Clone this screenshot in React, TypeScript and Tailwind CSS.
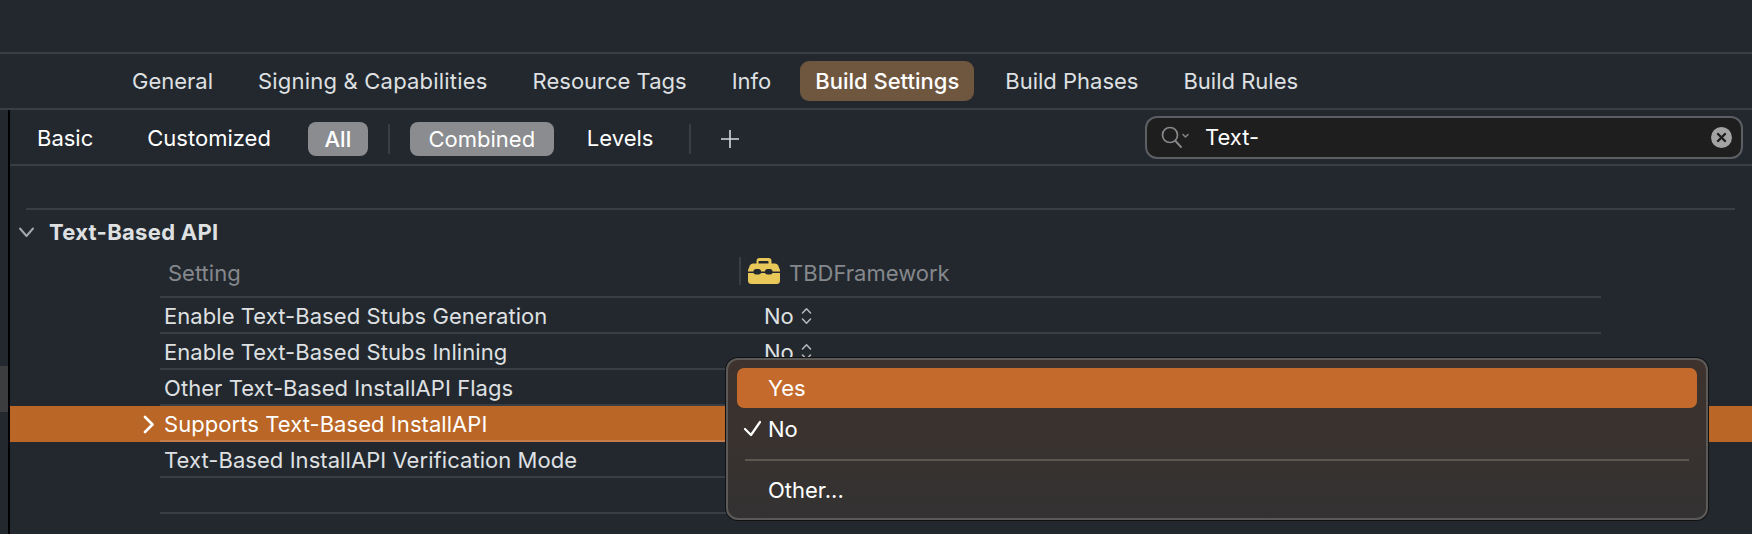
import React from 'react';

const tabs = ['General', 'Signing & Capabilities', 'Resource Tags', 'Info', 'Build Settings', 'Build Phases', 'Build Rules'];

const rows = [
  { name: 'Enable Text-Based Stubs Generation', value: 'No' },
  { name: 'Enable Text-Based Stubs Inlining', value: 'No' },
  { name: 'Other Text-Based InstallAPI Flags' },
  { name: 'Supports Text-Based InstallAPI', selected: true },
  { name: 'Text-Based InstallAPI Verification Mode' },
  { name: '' },
];

const UpDown = () => (
  <svg width="11" height="20" viewBox="0 0 11 20" fill="none" stroke="#b4b6b9" strokeWidth="1.6" strokeLinecap="round" strokeLinejoin="round">
    <path d="M1.500 7 5.500 2.800 9.500 7" />
    <path d="M1.500 13 5.500 17.200 9.500 13" />
  </svg>
);

const Toolbox = () => (
  <svg width="32" height="26" viewBox="0 0 32 26">
    <path d="M8.500 7V3a3 3 0 0 1 3-3h9a3 3 0 0 1 3 3v4h-3V3.500a.6.6 0 0 0-.6-.6h-8.800a.6.6 0 0 0-.6.6V7z" fill="#e9c85a" />
    <path d="M5 5.500h22a3.500 3.500 0 0 1 3 1.700L32 12v10.500a3.500 3.500 0 0 1-3.500 3.500h-25A3.500 3.500 0 0 1 0 22.500V12l2-4.800a3.500 3.500 0 0 1 3-1.700z" fill="#e9c85a" />
    <rect x="0" y="13.500" width="32" height="1.500" fill="#23282f" />
    <rect x="5.500" y="11" width="7.500" height="5.500" rx="2.500" fill="#23282f" />
    <rect x="17" y="11" width="7.500" height="5.500" rx="2.500" fill="#23282f" />
  </svg>
);

const SearchIcon = () => (
  <svg width="30" height="26" viewBox="0 0 30 26" fill="none" stroke="#85878a" strokeLinecap="round" strokeLinejoin="round">
    <circle cx="10" cy="11" r="7.500" strokeWidth="1.700" />
    <path d="M15.500 17 21 23" strokeWidth="1.900" />
    <path d="M23 10.500 25.500 13 28 10.500" strokeWidth="1.500" />
  </svg>
);

const App: React.FC = () => {
  return (
    <div className="relative w-[1752px] h-[534px] overflow-hidden bg-[#23282f] text-[#dfe0e2] text-[22px] font-['Inter','Liberation_Sans',sans-serif]">
      <div className="h-[54px] border-b-2 border-[#393d44]" />

      <div className="h-[56px] border-b-2 border-[#393d44] flex items-center pl-[118px] gap-[17px]">
        {tabs.map((tab) =>
          tab === 'Build Settings' ? (
            <div key={tab} className="h-[40px] -ml-[2px] px-[15px] flex items-center rounded-[9px] bg-[#6f563f] text-white font-medium">
              {tab}
            </div>
          ) : (
            <div key={tab} className={tab === 'Signing & Capabilities' ? 'px-[14px] h-[40px] flex items-center tracking-[0.2px]' : 'px-[14px] h-[40px] flex items-center'}>
              {tab}
            </div>
          ),
        )}
      </div>

      <div className="ml-2 border-l-2 border-black h-[424px]">
        <div className="h-[56px] border-b-2 border-[#393d44] flex items-center">
          <div className="ml-[27px] mt-[2px] text-white">Basic</div>
          <div className="ml-[54px] mt-[2px] text-white">Customized</div>
          <div className="ml-[37px] mt-[4px] h-[34px] w-[60px] flex items-center justify-center rounded-[8px] bg-[#8a8c8f] text-white font-medium">All</div>
          <div className="ml-[20px] mt-[4px] h-[30px] w-[2px] bg-[#393d44]" />
          <div className="ml-[20px] mt-[4px] h-[34px] w-[144px] flex items-center justify-center rounded-[8px] bg-[#8a8c8f] text-white">Combined</div>
          <div className="ml-[33px] mt-[2px] text-white">Levels</div>
          <div className="ml-[36px] mt-[4px] h-[30px] w-[2px] bg-[#393d44]" />
          <svg className="ml-[30px] mt-[4px]" width="18" height="18" viewBox="0 0 18 18" stroke="#d8d9db" strokeWidth="1.600">
            <path d="M9 0v18M0 9h18" />
          </svg>
          <div className="ml-auto mr-[9px] w-[598px] h-[43px] rounded-[12px] border-2 border-[#5b5e62] bg-[#1e1e1e] flex items-center pl-[13px] pr-[9px]">
            <SearchIcon />
            <span className="ml-[15px] text-white">Text-</span>
            <svg className="ml-auto" width="21" height="21" viewBox="0 0 21 21">
              <circle cx="10.500" cy="10.500" r="10.500" fill="#a3a3a3" />
              <path d="M7 7l7 7M14 7l-7 7" stroke="#1e1e1e" strokeWidth="2.400" strokeLinecap="round" />
            </svg>
          </div>
        </div>

        <div className="mt-[42px] h-[2px] ml-[16px] mr-[17px] bg-[#393d44]" />
        <div className="h-[44px] flex items-center">
          <svg className="ml-[8px]" width="17" height="12" viewBox="0 0 17 12" fill="none" stroke="#a5a7aa" strokeWidth="2" strokeLinecap="round" strokeLinejoin="round">
            <path d="M2 2.500 8.500 10 15 2.500" />
          </svg>
          <span className="ml-[14px] font-bold text-[#dfe0e2] tracking-[0.3px]">Text-Based API</span>
        </div>

        <div className="h-[44px] ml-[150px] mr-[151px] border-b-2 border-[#393d44] flex items-center pb-[4px] text-[#85888c]">
          <span className="pl-[8px] w-[579px]">Setting</span>
          <div className="h-[28px] w-[2px] mb-[4px] bg-[#393d44]" />
          <div className="ml-[7px] flex items-center">
            <div className="mb-[4px]">
              <Toolbox />
            </div>
            <span className="ml-[9px]">TBDFramework</span>
          </div>
        </div>

        {rows.map((row, i) => (
          <div key={i} className={row.selected ? 'h-[36px] flex bg-[#b96627] text-white' : 'h-[36px] flex'}>
            <div className="w-[150px] flex items-center justify-end pr-[6px]">
              {row.selected && (
                <svg width="11" height="19" viewBox="0 0 11 19" fill="none" stroke="#ffffff" strokeWidth="2.600" strokeLinecap="round" strokeLinejoin="round">
                  <path d="M2 2l7.500 7.500-7.500 7.500" />
                </svg>
              )}
            </div>
            <div className={row.selected ? 'flex-1 mr-[151px] pt-[2px] flex items-center border-b-2 border-[#c47d48]' : 'flex-1 mr-[151px] pt-[2px] flex items-center border-b-2 border-[#393d44]'}>
              <span className="pl-[4px] w-[604px] tracking-[0.06px]">{row.name}</span>
              {row.value && (
                <div className="flex items-center gap-[7px]">
                  <span>{row.value}</span>
                  <UpDown />
                </div>
              )}
            </div>
          </div>
        ))}
      </div>

      <div className="absolute left-0 top-[366px] w-[8px] h-[46px] bg-[#3c3d3f]" />

      {/* popup menu over the table */}
      <div className="absolute left-[726px] top-[358px] w-[982px] h-[162px] rounded-[12px] border-2 border-[#5c5a58] shadow-[0_0_0_1px_#111] bg-gradient-to-b from-[#3e322d] to-[#333232] text-white flex flex-col px-[9px] pt-[8px]">
        <div className="h-[40px] shrink-0 rounded-[7px] bg-[#c46a2c] flex items-center pl-[31px]">Yes</div>
        <div className="h-[40px] mt-[1px] shrink-0 flex items-center pl-[31px] relative">
          <svg className="absolute left-[6px] top-[11px]" width="18" height="17" viewBox="0 0 18 17" fill="none" stroke="#ffffff" strokeWidth="2.200" strokeLinecap="round" strokeLinejoin="round">
            <path d="M2 9l6 6L17 2" />
          </svg>
          No
        </div>
        <div className="mt-[10px] mx-[8px] h-[2px] shrink-0 bg-[#5e5853]" />
        <div className="mt-[9px] h-[40px] shrink-0 flex items-center pl-[31px]">Other...</div>
      </div>
    </div>
  );
};

export default App;
